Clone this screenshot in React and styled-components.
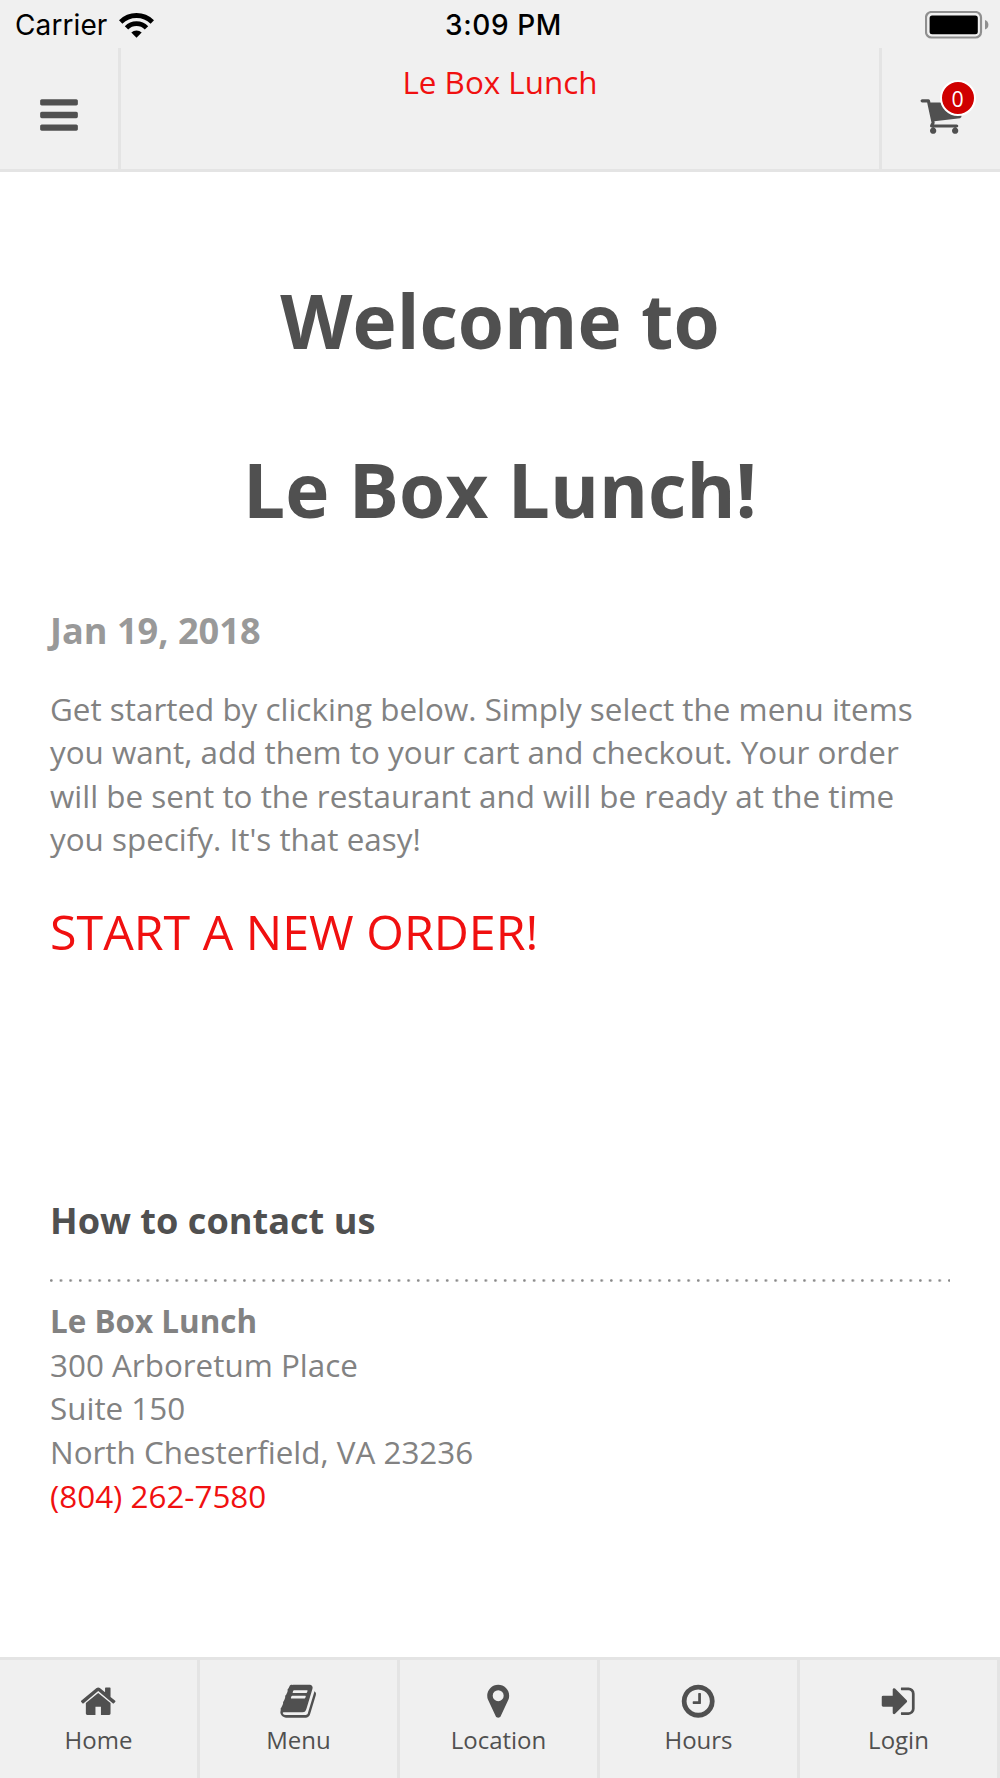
import styled, { createGlobalStyle } from 'styled-components';

const GlobalStyle = createGlobalStyle`
  * {
    box-sizing: border-box;
  }

  body {
    margin: 0;
    background: #fff;
    font-family: "Open Sans", sans-serif;
    font-size: 31.4px;
    color: #828282;
  }
`;

const Page = styled.div`
  display: flex;
  flex-direction: column;
  width: 1000px;
  height: 1778px;
  overflow: hidden;
`;

const StatusBar = styled.div`
  display: grid;
  grid-template-columns: 1fr auto 1fr;
  align-items: center;
  height: 48px;
  padding: 2px 11px 0 15px;
  background: #f0f0f0;
  color: #000;
  font-family: Inter, sans-serif;
  font-size: 28px;
  line-height: 46px;
`;

const Carrier = styled.div`
  display: flex;
  align-items: center;
  gap: 12px;
  letter-spacing: 0.1px;
`;

const Clock = styled.div`
  padding: 0 0 0 3px;
  font-weight: 550;
  letter-spacing: 0.6px;
`;

const BatteryIcon = styled.svg`
  justify-self: end;
`;

const Header = styled.header`
  display: flex;
  height: 124px;
  background: #f0f0f0;
  border-bottom: 3px solid #e4e4e4;
`;

const HeaderButton = styled.div`
  display: flex;
  align-items: center;
  justify-content: center;
  position: relative;
  width: 121px;
  padding-top: 13px;
  color: #505050;
  border-${props => props.$side}: 3px solid #e4e4e4;
`;

const HeaderTitle = styled.div`
  flex: 1;
  padding-top: 12px;
  color: #f01010;
  line-height: 43.6px;
  text-align: center;
`;

const Badge = styled.span`
  position: absolute;
  top: 32px;
  right: 24.5px;
  width: 36px;
  height: 36px;
  border: 2px solid #fff;
  border-radius: 50%;
  background: #d00000;
  color: #fff;
  font-size: 21.3px;
  line-height: 33px;
  text-align: center;
`;

const Icon = styled.svg`
  display: block;
  width: ${props => props.$size}px;
  height: ${props => props.$size}px;
  fill: currentColor;
`;

const Content = styled.main`
  flex: 1;
  padding: 64.4px 50px 0;
`;

const Welcome = styled.h1`
  margin: 0;
  color: #505050;
  font-size: 74.7px;
  line-height: 168.4px;
  text-align: center;
`;

const DateTitle = styled.h3`
  margin: 31.5px 0 0;
  color: #999;
  font-size: 36.15px;
  line-height: 50px;
`;

const Intro = styled.p`
  margin: 32px 0 0;
  line-height: 43.56px;
`;

const OrderLink = styled.a`
  display: block;
  margin-top: 37.8px;
  color: #f01010;
  font-size: 48.35px;
  line-height: 65px;
`;

const ContactTitle = styled.h3`
  margin: 231.4px 0 0;
  color: #505050;
  font-size: 36.15px;
  line-height: 50px;
`;

const DottedLine = styled.div`
  height: 3px;
  margin-top: 33.6px;
  background: radial-gradient(circle at 1.3px 1.5px, #888 0.8px, transparent 1.8px) 0 0 / 9.664px 3px repeat-x;
`;

const Address = styled.div`
  margin-top: 17.6px;
  line-height: 43.56px;
`;

const Phone = styled.a`
  color: #f01010;
`;

const TabBar = styled.nav`
  display: grid;
  grid-template-columns: repeat(5, 1fr);
  height: 121px;
  background: #f0f0f0;
  border-top: 3px solid #e4e4e4;
`;

const Tab = styled.a`
  display: flex;
  flex-direction: column;
  align-items: center;
  padding-top: 22px;
  border-right: 3px solid #e4e4e4;
  color: #505050;
  font-size: 24px;
  line-height: 33px;
`;

const TabLabel = styled.span`
  margin-top: 3px;
`;

const icons = {
  bars: 'M1664 1344v128q0 26-19 45t-45 19h-1408q-26 0-45-19t-19-45v-128q0-26 19-45t45-19h1408q26 0 45 19t19 45zm0-512v128q0 26-19 45t-45 19h-1408q-26 0-45-19t-19-45v-128q0-26 19-45t45-19h1408q26 0 45 19t19 45zm0-512v128q0 26-19 45t-45 19h-1408q-26 0-45-19t-19-45v-128q0-26 19-45t45-19h1408q26 0 45 19t19 45z',
  cart: 'M704 1536q0 52-38 90t-90 38-90-38-38-90 38-90 90-38 90 38 38 90zm896 0q0 52-38 90t-90 38-90-38-38-90 38-90 90-38 90 38 38 90zm128-1088v512q0 24-16.500 42.500t-40.500 21.500l-1044 122q13 60 13 70 0 16-24 64h920q26 0 45 19t19 45-19 45-45 19h-1024q-26 0-45-19t-19-45q0-11 8-31.500t16-36 21.500-40 15.500-29.500l-177-823h-204q-26 0-45-19t-19-45 19-45 45-19h256q16 0 28.500 6.500t19.500 15.500 13 24.500 8 26 5.500 29.500 4.500 26h1201q26 0 45 19t19 45z',
  home: 'M1472 992v480q0 26-19 45t-45 19h-384v-384h-256v384h-384q-26 0-45-19t-19-45v-480q0-1 .5-3t.5-3l575-474 575 474q1 2 1 6zm223-69l-62 74q-8 9-21 11h-3q-13 0-21-7l-692-577-692 577q-12 8-24 7-13-2-21-11l-62-74q-8-10-7-23.500t11-21.500l719-599q32-26 76-26t76 26l244 204v-195q0-14 9-23t23-9h192q14 0 23 9t9 23v408l219 182q10 8 11 21.500t-7 23.500z',
  book: 'M1703 478q40 57 18 129l-275 906q-19 64-76.500 107.500t-122.500 43.500h-923q-77 0-148.500-53.500t-99.500-131.500q-24-67-2-127 0-4 3-27t4-37q1-8-3-21.500t-3-19.500q2-11 8-21t16.500-23.500 16.500-23.500q23-38 45-91.500t30-91.500q3-10 .5-30t-.5-28q3-11 17-28t17-23q21-36 42-92t25-90q1-9-2.500-32t.5-28q4-13 22-30.500t22-22.500q19-26 42.500-84.500t27.500-96.500q1-8-3-25.500t-2-26.500q2-8 9-18t18-23 17-21q8-12 16.500-30.500t15-35 16-36 19.500-32 26.500-23.500 36-11.500 47.500 5.500l-1 3q38-9 51-9h761q74 0 114 56t18 130l-274 906q-36 119-71.500 153.500t-128.500 34.500h-869q-27 0-38 15-11 16-1 43 24 70 144 70h923q29 0 56-15.500t35-41.500l300-987q7-22 5-57 38 15 59 43zm-1064 2q-4 13 2 22.500t20 9.500h608q13 0 25.500-9.500t16.500-22.500l21-64q4-13-2-22.500t-20-9.500h-608q-13 0-25.500 9.500t-16.500 22.500zm-83 256q-4 13 2 22.500t20 9.500h608q13 0 25.500-9.500t16.500-22.500l21-64q4-13-2-22.500t-20-9.500h-608q-13 0-25.500 9.500t-16.500 22.500z',
  marker: 'M1152 640q0-106-75-181t-181-75-181 75-75 181 75 181 181 75 181-75 75-181zm256 0q0 109-33 179l-364 774q-16 33-47.500 52t-67.500 19-67.500-19-46.500-52l-365-774q-33-70-33-179 0-212 150-362t362-150 362 150 150 362z',
  clock: 'M1024 544v448q0 14-9 23t-23 9h-320q-14 0-23-9t-9-23v-64q0-14 9-23t23-9h224v-352q0-14 9-23t23-9h64q14 0 23 9t9 23zm416 352q0-148-73-273t-198-198-273-73-273 73-198 198-73 273 73 273 198 198 273 73 273-73 198-198 73-273zm224 0q0 209-103 385.500t-279.500 279.500-385.500 103-385.500-103-279.500-279.500-103-385.500 103-385.500 279.500-279.500 385.500-103 385.500 103 279.500 279.500 103 385.500z',
  login: 'M1312 896q0 26-19 45l-544 544q-19 19-45 19t-45-19-19-45v-288h-448q-26 0-45-19t-19-45v-384q0-26 19-45t45-19h448v-288q0-26 19-45t45-19 45 19l544 544q19 19 19 45zm352-352v704q0 119-84.500 203.500t-203.500 84.500h-320q-13 0-22.500-9.500t-9.500-22.500q0-4-1-20t-.5-26.500 3-23.500 10-19.500 20.500-6.500h320q66 0 113-47t47-113v-704q0-66-47-113t-113-47h-312l-11.500-1-11.500-3-8-5.500-7-9-2-13.500q0-4-1-20t-.5-26.500 3-23.500 10-19.500 20.500-6.500h320q119 0 203.500 84.500t84.500 203.500z',
};

const tabs = [
  { icon: 'home', label: 'Home' },
  { icon: 'book', label: 'Menu' },
  { icon: 'marker', label: 'Location' },
  { icon: 'clock', label: 'Hours' },
  { icon: 'login', label: 'Login' },
];

function FontIcon({name, size}) {
  return (
    <Icon $size={size} viewBox="0 0 1792 1792">
      <path d={icons[name]} />
    </Icon>
  );
}

function Wifi() {
  return (
    <svg width="35" height="25" viewBox="0 0 35 25">
      <g fill="none" stroke="#000" strokeWidth="4.800">
        <path d="M1.700 9A22.500 22.500 0 0 1 33.300 9" />
        <path d="M7.500 14.900A14 14 0 0 1 27.500 14.900" />
      </g>
      <path d="M17.500 24.700L12.300 19.500A7.500 7.500 0 0 1 22.700 19.500Z" />
    </svg>
  );
}

function Battery() {
  return (
    <BatteryIcon width="64" height="28" viewBox="0 0 64 28">
      <rect x="1" y="1" width="55" height="25.500" rx="5.500" fill="none" stroke="#8f8f8f" strokeWidth="2.200" />
      <rect x="4.600" y="4.400" width="48.200" height="18.800" rx="2.500" />
      <path d="M60 9q3.400 1.200 3.400 4.800t-3.400 4.800z" fill="#8f8f8f" />
    </BatteryIcon>
  );
}

function App() {
  return (
    <Page>
      <GlobalStyle />
      <StatusBar>
        <Carrier>
          <span>Carrier</span>
          <Wifi />
        </Carrier>
        <Clock>3:09 PM</Clock>
        <Battery />
      </StatusBar>

      <Header>
        <HeaderButton $side="right">
          <FontIcon name="bars" size={44} />
        </HeaderButton>
        <HeaderTitle>Le Box Lunch</HeaderTitle>
        <HeaderButton $side="left">
          <FontIcon name="cart" size={44} />
          <Badge>0</Badge>
        </HeaderButton>
      </Header>

      <Content>
        <Welcome>
          Welcome to
          <br />
          Le Box Lunch!
        </Welcome>
        <DateTitle>Jan 19, 2018</DateTitle>
        <Intro>
          Get started by clicking below. Simply select the menu items you want, add them to your cart and checkout. Your order will be sent to the restaurant and will be ready at the time you specify. It's that easy!
        </Intro>
        <OrderLink>START A NEW ORDER!</OrderLink>

        <ContactTitle>How to contact us</ContactTitle>
        <DottedLine />
        <Address>
          <strong>Le Box Lunch</strong>
          <br />
          300 Arboretum Place
          <br />
          Suite 150
          <br />
          North Chesterfield, VA 23236
          <br />
          <Phone>(804) 262-7580</Phone>
        </Address>
      </Content>

      <TabBar>
        {tabs.map(tab => (
          <Tab key={tab.label}>
            <FontIcon name={tab.icon} size={38.4} />
            <TabLabel>{tab.label}</TabLabel>
          </Tab>
        ))}
      </TabBar>
    </Page>
  );
}

export default App;
